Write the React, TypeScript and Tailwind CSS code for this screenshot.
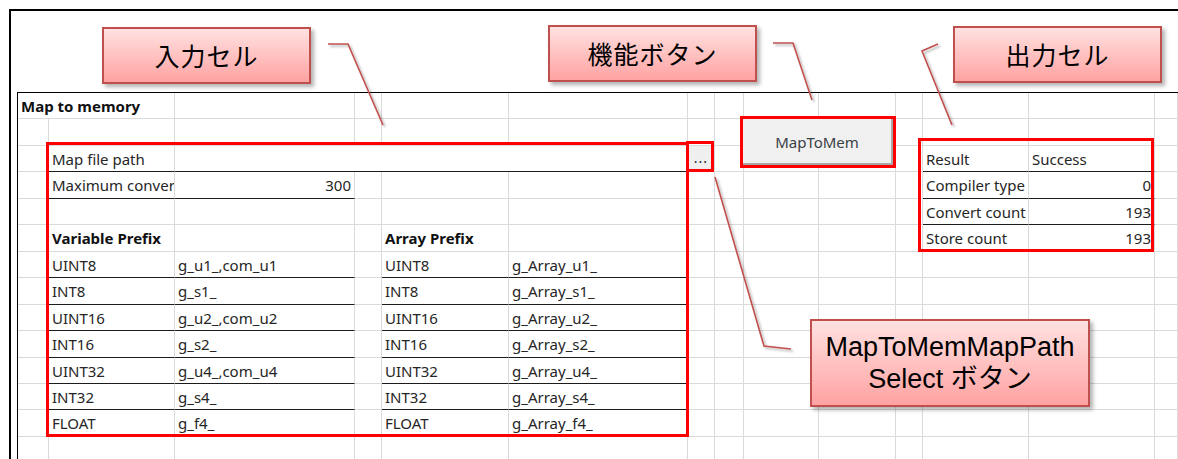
import React from 'react';
import clsx from 'clsx';

type Cell = {
  text?: string;
  bold?: boolean;
  right?: boolean;
  line?: boolean; // black bottom border
  cols?: number;
  fill?: boolean;
  small?: boolean;
};

const gridCols =
  'grid grid-cols-[31px_126px_180px_27px_127px_179px_27px_29px_75px_77px_27px_106px_126px_1fr]';

const spanClass: Record<number, string> = { 1: '', 2: 'col-span-2', 4: 'col-span-4' };

const types = ['UINT8', 'INT8', 'UINT16', 'INT16', 'UINT32', 'INT32', 'FLOAT'];
const varPrefix = ['g_u1_,com_u1', 'g_s1_', 'g_u2_,com_u2', 'g_s2_', 'g_u4_,com_u4', 'g_s4_', 'g_f4_'];
const arrPrefix = [
  'g_Array_u1_',
  'g_Array_s1_',
  'g_Array_u2_',
  'g_Array_s2_',
  'g_Array_u4_',
  'g_Array_s4_',
  'g_Array_f4_',
];

// row heights follow the sheet's 26/27px gridlines
const rows: { h: string; cells: Record<number, Cell> }[] = [
  { h: 'h-[26px]', cells: { 0: { text: 'Map to memory', bold: true, cols: 2 } } },
  { h: 'h-[27px]', cells: {} },
  {
    h: 'h-[26px]',
    cells: {
      1: { text: 'Map file path', line: true },
      2: { cols: 4, line: true },
      6: { text: '...', fill: true, small: true },
      11: { text: 'Result', line: true },
      12: { text: 'Success', line: true },
    },
  },
  {
    h: 'h-[27px]',
    cells: {
      1: { text: 'Maximum conver', line: true },
      2: { text: '300', right: true, line: true },
      11: { text: 'Compiler type', line: true },
      12: { text: '0', right: true, line: true },
    },
  },
  {
    h: 'h-[26px]',
    cells: {
      11: { text: 'Convert count', line: true },
      12: { text: '193', right: true, line: true },
    },
  },
  {
    h: 'h-[27px]',
    cells: {
      1: { text: 'Variable Prefix', bold: true },
      4: { text: 'Array Prefix', bold: true },
      11: { text: 'Store count' },
      12: { text: '193', right: true },
    },
  },
  ...types.map((t, i) => ({
    h: ['h-[26px]', 'h-[27px]', 'h-[26px]', 'h-[27px]', 'h-[26px]', 'h-[26px]', 'h-[27px]'][i],
    cells: {
      1: { text: t, line: true },
      2: { text: varPrefix[i], line: true },
      4: { text: t, line: true },
      5: { text: arrPrefix[i], line: true },
    } as Record<number, Cell>,
  })),
  { h: 'h-[26px]', cells: {} },
];

function SheetRow({ h, cells }: { h: string; cells: Record<number, Cell> }) {
  const out: React.ReactNode[] = [];
  for (let c = 0; c < 14; c++) {
    const cell = cells[c] ?? {};
    const n = cell.cols ?? 1;
    out.push(
      <div
        key={c}
        className={clsx(
          'flex items-center border-r border-b border-r-[#dadada] px-[3px] pt-[1px] whitespace-nowrap',
          spanClass[n],
          cell.line ? 'border-b-[#1c1c1c]' : 'border-b-[#dadada]',
          cell.right && 'justify-end',
          cell.fill && 'bg-[#efefef] justify-center',
          cell.cols === 2 ? 'overflow-visible' : 'overflow-hidden'
        )}
      >
        {cell.text && (
          <span
            className={clsx(
              'leading-none',
              cell.bold ? 'font-bold text-[#111]' : 'text-[#262626]',
              cell.small ? 'text-[14px] tracking-[1px] pb-[3px]' : 'text-[15px]'
            )}
          >
            {cell.text}
          </span>
        )}
      </div>
    );
    c += n - 1;
  }
  return <div className={clsx(gridCols, h)}>{out}</div>;
}

function Callout({ className, children }: { className: string; children: React.ReactNode }) {
  return (
    <div
      className={clsx(
        'absolute flex flex-col items-center justify-center border-2 border-[#c0504d] bg-linear-to-b from-[#ffe1e1] to-[#ffa2a2] text-black shadow-[3px_3px_4px_rgba(0,0,0,0.3)]',
        className
      )}
    >
      {children}
    </div>
  );
}

export default function App() {
  return (
    <div className="relative h-[459px] w-[1178px] overflow-hidden bg-white font-['Noto_Sans','Noto_Sans_CJK_JP',sans-serif]">
      {/* sheet in its frame */}
      <div className="pl-[9px] pt-[9px]">
        <div className="h-[450px] border-l-2 border-t-2 border-black">
          <div className="h-[81px]" />
          <div className="ml-[6px] border-l border-t border-black">
            {rows.map((r, i) => (
              <SheetRow key={i} h={r.h} cells={r.cells} />
            ))}
          </div>
        </div>
      </div>

      {/* MapToMem button */}
      <div className="absolute left-[740px] top-[116px] h-[52px] w-[156px] border-[3px] border-[#ff0000] bg-[#f0f0f0]">
        <div className="flex h-full w-full items-center justify-center border-b-2 border-r-2 border-[#a8a8a8] pt-[2px] text-[15px] leading-none text-[#3b4046]">
          MapToMem
        </div>
      </div>

      {/* red highlight boxes */}
      <div className="absolute left-[46px] top-[142px] h-[295px] w-[643px] border-[3px] border-[#ff0000]" />
      <div className="absolute left-[686px] top-[141px] h-[31px] w-[28px] border-[3px] border-[#ff0000]" />
      <div className="absolute left-[918px] top-[138px] h-[114px] w-[236px] border-[3px] border-[#ff0000]" />

      {/* leader lines */}
      <svg className="pointer-events-none absolute left-0 top-0" width="1178" height="459">
        <defs>
          <filter id="sh" x="-20%" y="-20%" width="140%" height="140%">
            <feDropShadow dx="2" dy="2" stdDeviation="1.2" floodColor="#000" floodOpacity="0.3" />
          </filter>
        </defs>
        <g fill="none" stroke="#c0504d" strokeWidth="1.6" filter="url(#sh)">
          <polyline points="328,44 348,44 383,125" />
          <polyline points="773,43 793,43 812,100" />
          <polyline points="938,44 922,51 952,125" />
          <polyline points="715,177 764,346 791,349" />
        </g>
      </svg>

      {/* callouts */}
      <Callout className="left-[102px] top-[27px] h-[57px] w-[209px]">
        <span className="font-['Noto_Sans_CJK_JP',sans-serif] text-[25px] leading-none tracking-[1px]">入力セル</span>
      </Callout>
      <Callout className="left-[548px] top-[25px] h-[57px] w-[209px]">
        <span className="font-['Noto_Sans_CJK_JP',sans-serif] text-[25px] leading-none tracking-[1px]">機能ボタン</span>
      </Callout>
      <Callout className="left-[953px] top-[26px] h-[57px] w-[209px]">
        <span className="font-['Noto_Sans_CJK_JP',sans-serif] text-[25px] leading-none tracking-[1px]">出力セル</span>
      </Callout>
      <Callout className="left-[810px] top-[319px] h-[88px] w-[280px]">
        <span className="font-['Liberation_Sans','Noto_Sans_CJK_JP',sans-serif] text-[27px] leading-[32px]">
          MapToMemMapPath
        </span>
        <span className="font-['Liberation_Sans','Noto_Sans_CJK_JP',sans-serif] text-[27px] leading-[32px]">
          Select ボタン
        </span>
      </Callout>
    </div>
  );
}
